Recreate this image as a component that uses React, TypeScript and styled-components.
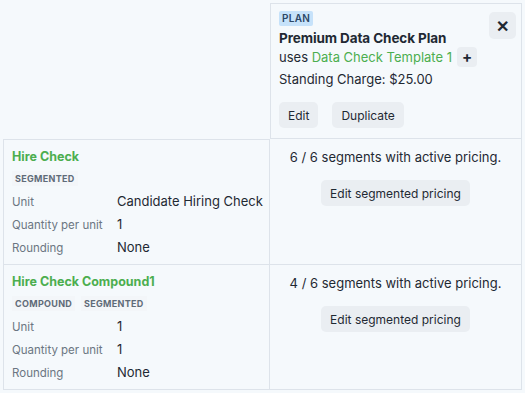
import React from "react";
import styled, { createGlobalStyle } from "styled-components";

const GlobalStyle = createGlobalStyle`
  html, body {
    margin: 0;
    padding: 0;
    background: #f5f9fc;
  }
  body {
    padding: 3px;
    font-family: "Inter", "Noto Sans", sans-serif;
    color: #1f2933;
  }
`;

const Grid = styled.div`
  display: grid;
  grid-template-columns: 267px 252px;
  grid-template-rows: 136px 126px 125px;
`;

const Cell = styled.div<{ $left?: boolean; $top?: boolean }>`
  box-sizing: border-box;
  border-right: 1px solid #dde3ea;
  border-bottom: 1px solid #dde3ea;
  border-left: ${(p) => (p.$left ? "1px solid #dde3ea" : "none")};
  border-top: ${(p) => (p.$top ? "1px solid #dde3ea" : "none")};
  padding: 7px 8px;
  overflow: hidden;
`;

const Empty = styled.div``;

const PlanCell = styled(Cell)`
  position: relative;
  display: flex;
  flex-direction: column;
  align-items: flex-start;
`;

const Badge = styled.span`
  background: #c6e2fa;
  color: #2c4766;
  font-size: 10px;
  font-weight: 600;
  letter-spacing: 0.3px;
  padding: 2px 3px;
  border-radius: 2px;
  line-height: 11px;
`;

const PlanTitle = styled.div`
  font-size: 13.5px;
  font-weight: 700;
  margin-top: 4px;
  letter-spacing: -0.1px;
`;

const UsesLine = styled.div`
  display: flex;
  align-items: center;
  gap: 5px;
  font-size: 13px;
  margin-top: 1px;
`;

const GreenLink = styled.span`
  color: #4cae4f;
`;

const SmallButton = styled.button`
  border: none;
  background: #eaeef2;
  border-radius: 4px;
  width: 20px;
  height: 20px;
  padding: 0;
  font-size: 15px;
  font-weight: 700;
  color: #1f2933;
  font-family: inherit;
  line-height: 20px;
`;

const Charge = styled.div`
  font-size: 13px;
  margin-top: 4px;
`;

const ButtonRow = styled.div`
  display: flex;
  gap: 14px;
  margin-top: 15px;
`;

const Button = styled.button`
  border: none;
  background: #eaeef2;
  border-radius: 5px;
  height: 26px;
  padding: 0 9px;
  font-family: inherit;
  font-size: 12px;
  color: #1f2933;
`;

const CloseButton = styled.button`
  position: absolute;
  top: 8px;
  right: 5px;
  width: 27px;
  height: 27px;
  border: none;
  border-radius: 5px;
  background: #eaeef2;
  font-size: 16px;
  font-weight: 700;
  color: #1f2933;
  font-family: inherit;
  padding: 0;
`;

const ItemCell = styled(Cell)`
  padding: 9px 8px;
`;

const ItemTitle = styled.div`
  color: #4cae4f;
  font-weight: 700;
  font-size: 12.5px;
  line-height: 16px;
`;

const Tags = styled.div`
  display: flex;
  gap: 6px;
  margin-top: 6px;
`;

const Tag = styled.span`
  font-size: 9px;
  font-weight: 700;
  color: #5f6b78;
  letter-spacing: 0.3px;
  padding: 2px 3px;
  background: #f3f6f9;
  line-height: 11px;
`;

const Props = styled.div`
  display: grid;
  grid-template-columns: 105px 1fr;
  row-gap: 5px;
  margin-top: 7px;
  align-items: baseline;
`;

const Label = styled.span`
  font-size: 11.5px;
  color: #6b7682;
  line-height: 17px;
  white-space: nowrap;
`;

const Value = styled.span`
  font-size: 13px;
  color: #1f2933;
  line-height: 17px;
  white-space: nowrap;
`;

const PricingCell = styled(Cell)`
  display: flex;
  flex-direction: column;
  align-items: center;
  padding-top: 10px;
`;

const PricingText = styled.div`
  font-size: 13px;
  line-height: 17px;
`;

const PricingButton = styled(Button)`
  margin-top: 14px;
  padding: 0 9px;
`;

type Item = {
  name: string;
  tags: string[];
  unit: string;
  qty: string;
  rounding: string;
  active: number;
  total: number;
};

const items: Item[] = [
  { name: "Hire Check", tags: ["SEGMENTED"], unit: "Candidate Hiring Check", qty: "1", rounding: "None", active: 6, total: 6 },
  { name: "Hire Check Compound1", tags: ["COMPOUND", "SEGMENTED"], unit: "1", qty: "1", rounding: "None", active: 4, total: 6 },
];

export default function App() {
  return (
    <>
      <GlobalStyle />
      <Grid>
        <Empty />
        <PlanCell $left $top>
          <Badge>PLAN</Badge>
          <PlanTitle>Premium Data Check Plan</PlanTitle>
          <UsesLine>
            <span>
              uses <GreenLink>Data Check Template 1</GreenLink>
            </span>
            <SmallButton>+</SmallButton>
          </UsesLine>
          <Charge>Standing Charge: $25.00</Charge>
          <ButtonRow>
            <Button>Edit</Button>
            <Button>Duplicate</Button>
          </ButtonRow>
          <CloseButton>✕</CloseButton>
        </PlanCell>
        {items.map((item, i) => (
          <React.Fragment key={item.name}>
            <ItemCell $left $top={i === 0}>
              <ItemTitle>{item.name}</ItemTitle>
              <Tags>
                {item.tags.map((t) => (
                  <Tag key={t}>{t}</Tag>
                ))}
              </Tags>
              <Props>
                <Label>Unit</Label>
                <Value>{item.unit}</Value>
                <Label>Quantity per unit</Label>
                <Value>{item.qty}</Value>
                <Label>Rounding</Label>
                <Value>{item.rounding}</Value>
              </Props>
            </ItemCell>
            <PricingCell>
              <PricingText>
                {item.active} / {item.total} segments with active pricing.
              </PricingText>
              <PricingButton>Edit segmented pricing</PricingButton>
            </PricingCell>
          </React.Fragment>
        ))}
      </Grid>
    </>
  );
}
